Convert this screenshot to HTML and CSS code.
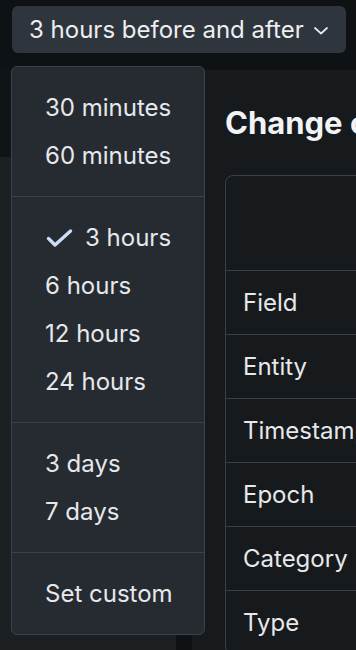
FILE: index.html
```html
<!DOCTYPE html>
<html lang="en">
<head>
    <meta charset="UTF-8">
    <meta name="viewport" content="width=device-width, initial-scale=1.0">
    <title>Change comparison</title>
    <link rel="stylesheet" href="styles.css">
</head>
<body>
    <header class="topbar">
        <button class="range-btn">
            3 hours before and after
            <svg class="chevron" width="14" height="8" viewBox="0 0 14 8"><path d="M1 1 L7 6.5 L13 1" fill="none" stroke="currentColor" stroke-width="1.7" stroke-linecap="round" stroke-linejoin="round"/></svg>
        </button>
    </header>

    <div class="layout">
        <aside class="sidebar">
            <div class="sidebar-head"></div>
            <div class="sidebar-body"></div>
        </aside>
        <main class="main">
            <h1>Change comparison</h1>
            <div class="table">
                <div class="table-head"></div>
                <div class="row">Field</div>
                <div class="row">Entity</div>
                <div class="row">Timestamp</div>
                <div class="row">Epoch</div>
                <div class="row">Category</div>
                <div class="row">Type</div>
            </div>
        </main>
    </div>

    <!-- dropdown opened from the range button -->
    <div class="menu">
        <div class="menu-group">
            <div class="menu-item">30 minutes</div>
            <div class="menu-item">60 minutes</div>
        </div>
        <div class="menu-group">
            <div class="menu-item selected">
                <svg class="check" width="28" height="20" viewBox="0 0 28 20"><path d="M3.5 10.5 L10 17 L25.5 3" fill="none" stroke="currentColor" stroke-width="3.4" stroke-linecap="round" stroke-linejoin="round"/></svg>
                3 hours
            </div>
            <div class="menu-item">6 hours</div>
            <div class="menu-item">12 hours</div>
            <div class="menu-item">24 hours</div>
        </div>
        <div class="menu-group">
            <div class="menu-item">3 days</div>
            <div class="menu-item">7 days</div>
        </div>
        <div class="menu-group">
            <div class="menu-item">Set custom</div>
        </div>
    </div>
</body>
</html>
```

FILE: styles.css
```css
body {
    margin: 0;
    width: 356px;
    height: 650px;
    overflow: hidden;
    position: relative;
    background-color: #0f1214;
    font-family: Inter, "Noto Sans", sans-serif;
    color: #e6e8eb;
}
.topbar {
    height: 70px;
    padding: 6px 10px 0 12px;
    box-sizing: border-box;
}
.range-btn {
    display: flex;
    align-items: center;
    gap: 10px;
    width: 334px;
    height: 47px;
    padding: 0 0 0 17px;
    border: none;
    border-radius: 6px;
    background-color: #2f353c;
    color: #eceef0;
    font-family: inherit;
    font-size: 24px;
    white-space: nowrap;
}
.chevron {
    color: #e6e8eb;
    margin-top: 2px;
}
.layout {
    display: flex;
    gap: 16px;
    height: 580px;
}
.sidebar {
    width: 176px;
    flex-shrink: 0;
    display: flex;
    flex-direction: column;
}
.sidebar-head {
    height: 87px;
    background-color: #111416;
}
.sidebar-body {
    flex: 1;
    background-color: #1b1f22;
}
.main {
    flex: 1;
    background-color: #161a1c;
    padding: 0 0 0 33px;
    min-width: 0;
}
.main h1 {
    margin: 34px 0 0;
    height: 71px;
    font-size: 31px;
    font-weight: 700;
    white-space: nowrap;
    color: #f1f3f5;
}
.table {
    width: 420px;
    border: 1px solid #3a4046;
    border-radius: 8px;
}
.table-head {
    height: 94px;
}
.row {
    height: 63px;
    border-top: 1px solid #3a4046;
    display: flex;
    align-items: center;
    padding-left: 17px;
    font-size: 24px;
    white-space: nowrap;
}
.menu {
    position: absolute;
    left: 11px;
    top: 66px;
    width: 192px;
    background-color: #262b31;
    border: 1px solid #3b4148;
    border-radius: 6px;
}
.menu-group {
    padding: 16.5px 0;
}
.menu-group + .menu-group {
    border-top: 1px solid #3b4148;
}
.menu-item {
    height: 48px;
    display: flex;
    align-items: center;
    gap: 12px;
    padding-left: 33px;
    font-size: 24px;
    white-space: nowrap;
    color: #e6e8eb;
}
.check {
    color: #c9def5;
}
```
